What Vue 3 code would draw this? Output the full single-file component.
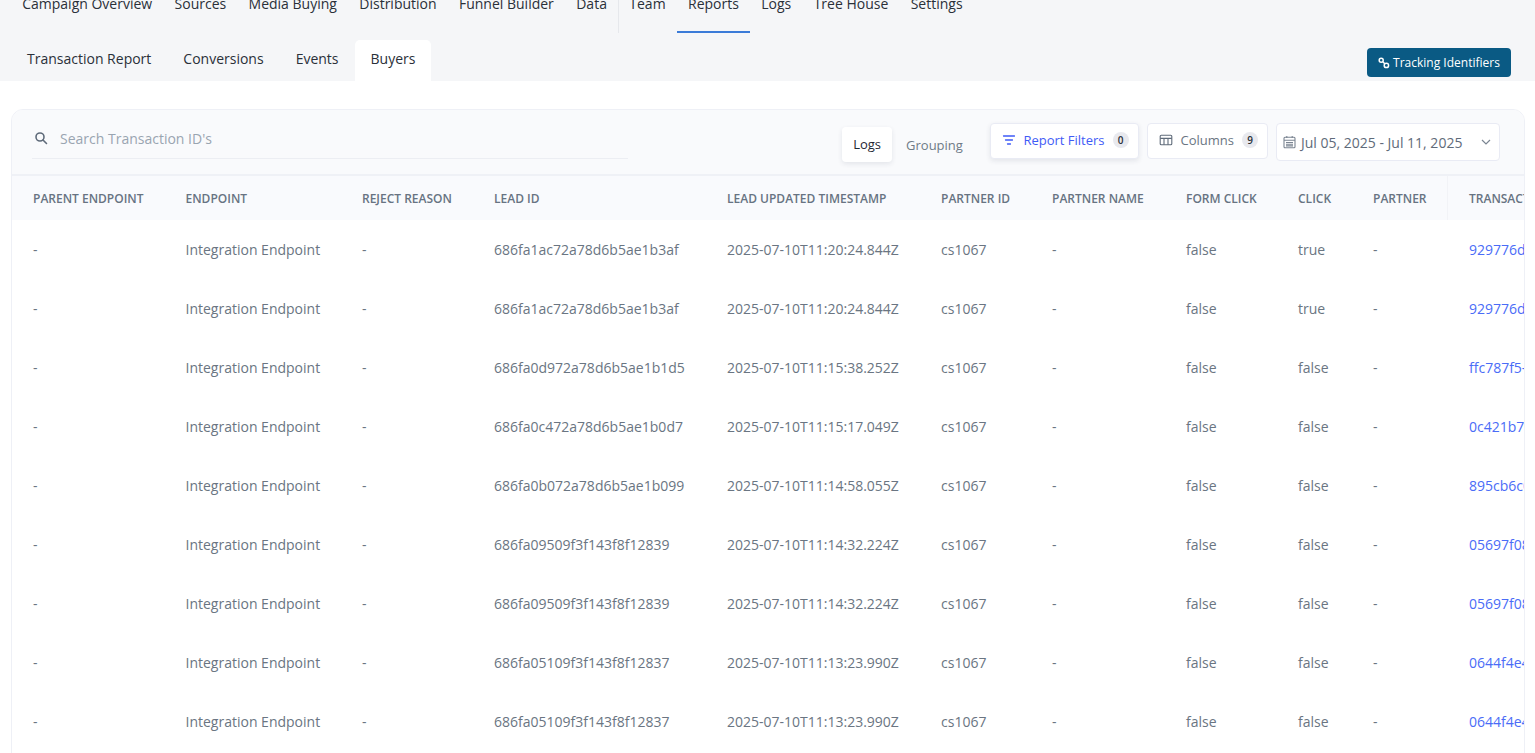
<script setup>
const nav = ['Campaign Overview', 'Sources', 'Media Buying', 'Distribution', 'Funnel Builder', 'Data']
const nav2 = ['Team', 'Reports', 'Logs', 'Tree House', 'Settings']
const tabs = ['Transaction Report', 'Conversions', 'Events', 'Buyers']
const heads = ['PARENT ENDPOINT', 'ENDPOINT', 'REJECT REASON', 'LEAD ID', 'LEAD UPDATED TIMESTAMP', 'PARTNER ID', 'PARTNER NAME', 'FORM CLICK', 'CLICK', 'PARTNER', 'TRANSACTION ID']
const widths = [152.5, 176.5, 132, 233, 214, 111, 134, 112, 75, 96, 300]
const rows = [
  ['686fa1ac72a78d6b5ae1b3af', '2025-07-10T11:20:24.844Z', 'true', '929776d4-8f21-4b7a'],
  ['686fa1ac72a78d6b5ae1b3af', '2025-07-10T11:20:24.844Z', 'true', '929776d4-8f21-4b7a'],
  ['686fa0d972a78d6b5ae1b1d5', '2025-07-10T11:15:38.252Z', 'false', 'ffc787f5-1a3c-49de'],
  ['686fa0c472a78d6b5ae1b0d7', '2025-07-10T11:15:17.049Z', 'false', '0c421b7a-62ef-4c10'],
  ['686fa0b072a78d6b5ae1b099', '2025-07-10T11:14:58.055Z', 'false', '895cb6c0-7d14-4e2b'],
  ['686fa09509f3f143f8f12839', '2025-07-10T11:14:32.224Z', 'false', '05697f08-3b9a-47c6'],
  ['686fa09509f3f143f8f12839', '2025-07-10T11:14:32.224Z', 'false', '05697f08-3b9a-47c6'],
  ['686fa05109f3f143f8f12837', '2025-07-10T11:13:23.990Z', 'false', '0644f4e4-95d2-4a81'],
  ['686fa05109f3f143f8f12837', '2025-07-10T11:13:23.990Z', 'false', '0644f4e4-95d2-4a81']
]
</script>

<template>
  <div class="page">
    <header class="top">
      <nav class="nav">
        <a v-for="n in nav" :key="n" class="nav-item">{{ n }}</a>
        <span class="nav-sep"></span>
        <a v-for="n in nav2" :key="n" class="nav-item" :class="{ active: n === 'Reports' }">{{ n }}</a>
      </nav>
      <div class="tabbar">
        <div class="tabs">
          <a v-for="t in tabs" :key="t" class="tab" :class="{ on: t === 'Buyers' }">{{ t }}</a>
        </div>
        <button class="track">
          <svg width="12" height="12" viewBox="0 0 12 12" fill="none" stroke="#fff" stroke-width="1.5"><circle cx="3.2" cy="3.2" r="2"/><circle cx="8.4" cy="8.4" r="2.2"/><path d="M4.8 4.8l2 2"/></svg>
          Tracking Identifiers
        </button>
      </div>
    </header>

    <main class="main">
      <section class="card">
        <div class="toolbar">
          <div class="search">
            <svg width="14" height="14" viewBox="0 0 14 14" fill="none" stroke="#5f6b7a" stroke-width="1.6"><circle cx="6" cy="6" r="4"/><path d="M9 9l3.5 3.5" stroke-linecap="round"/></svg>
            <span class="ph">Search Transaction ID's</span>
          </div>
          <div class="tools">
            <div class="seg">
              <span class="seg-on">Logs</span>
              <span class="seg-off">Grouping</span>
            </div>
            <button class="tool blue">
              <svg width="14" height="14" viewBox="0 0 14 14" fill="none" stroke="#3f5bf6" stroke-width="1.3" stroke-linecap="round"><path d="M1.5 3h11M3.5 7h7M5.5 11h3"/></svg>
              <span>Report Filters</span><i class="badge">0</i>
            </button>
            <button class="tool">
              <svg width="14" height="14" viewBox="0 0 14 14" fill="none" stroke="#5f6b7a" stroke-width="1.1"><rect x="1.2" y="2.2" width="11.6" height="9.6" rx="1"/><path d="M1.2 5.4h11.6M5 5.4v6.4M9 5.4v6.4"/></svg>
              <span>Columns</span><i class="badge">9</i>
            </button>
            <div class="date">
              <svg width="13" height="14" viewBox="0 0 13 14" fill="none" stroke="#7b8592" stroke-width="1.1"><rect x="1" y="2.2" width="11" height="10.6" rx="1"/><path d="M1 5.2h11M3.8 1v2M9.2 1v2M3 7.5h7M3 9.2h7M3 10.9h7"/></svg>
              <span class="date-text">Jul 05, 2025 - Jul 11, 2025</span>
              <svg class="chev" width="10" height="6" viewBox="0 0 10 6" fill="none" stroke="#7b8592" stroke-width="1.2"><path d="M1 1l4 4 4-4"/></svg>
            </div>
          </div>
        </div>
        <table class="grid">
          <colgroup>
            <col v-for="(w, i) in widths" :key="i" :style="{ width: w + 'px' }" />
          </colgroup>
          <thead>
            <tr>
              <th v-for="(h, i) in heads" :key="h" :class="{ edge: i === 9 }">{{ h }}</th>
            </tr>
          </thead>
          <tbody>
            <tr v-for="(r, i) in rows" :key="i">
              <td>-</td>
              <td>Integration Endpoint</td>
              <td>-</td>
              <td>{{ r[0] }}</td>
              <td>{{ r[1] }}</td>
              <td>cs1067</td>
              <td>-</td>
              <td>false</td>
              <td>{{ r[2] }}</td>
              <td>-</td>
              <td class="link">{{ r[3] }}</td>
            </tr>
          </tbody>
        </table>
      </section>
    </main>
  </div>
</template>

<style>
html, body { margin: 0; overflow: hidden; background: #fff; }
</style>

<style scoped>
.page {
  width: 1535px;
  height: 753px;
  overflow: hidden;
  font-family: "Open Sans", "Noto Sans", sans-serif;
  color: #1f2733;
}
.top { background: #f5f6f8; height: 81px; }
.nav {
  display: flex;
  height: 33px;
  padding-left: 11px;
  align-items: stretch;
}
.nav-item {
  position: relative;
  padding: 0 11.2px;
  font-size: 14px;
  line-height: 8px;
  color: #2a3039;
}
.nav-item.active::after {
  content: "";
  position: absolute;
  left: 0;
  right: 0;
  bottom: 0;
  height: 2px;
  background: #3b7bd8;
}
.nav-sep { width: 1px; background: #e6e8ec; margin-right: -1px; }
.tabbar {
  display: flex;
  justify-content: space-between;
  margin-top: 7px;
  height: 41px;
  padding: 0 24px 0 11px;
}
.tabs { display: flex; }
.tab {
  padding: 0 16px;
  font-size: 14px;
  line-height: 38px;
  color: #2a3039;
  border-radius: 5px 5px 0 0;
}
.tab.on { background: #fff; }
.track {
  margin-top: 8px;
  height: 29px;
  width: 144px;
  border: 0;
  border-radius: 4px;
  background: #0a5a84;
  color: #fff;
  font: 12px "Open Sans", sans-serif;
  display: flex;
  align-items: center;
  justify-content: center;
  gap: 3px;
  padding: 0;
}
.main { padding: 28px 10px 0 11px; }
.card {
  border: 1px solid #eef0f6;
  border-radius: 12px;
  overflow: hidden;
  background: #fff;
  padding-bottom: 40px;
}
.toolbar {
  display: flex;
  justify-content: space-between;
  height: 64px;
  background: #f9fafc;
  border-bottom: 2px solid #eff1f6;
  padding-left: 20px;
  padding-right: 24px;
}
.search {
  width: 596px;
  height: 49px;
  display: flex;
  align-items: center;
  gap: 12px;
  padding: 8px 0 0 2px;
  box-sizing: border-box;
  border-bottom: 1px solid #eceef3;
}
.ph { font-size: 14px; color: #9aa5b1; }
.tools { display: flex; align-items: flex-start; padding-top: 13px; }
.seg { display: flex; align-items: center; margin-top: 4px; margin-right: 14px; }
.seg-on {
  background: #fff;
  border-radius: 4px;
  box-shadow: 0 2px 5px rgba(40, 50, 80, .1);
  font-size: 13px;
  line-height: 35px;
  padding: 0 11px;
  color: #1f2733;
}
.seg-off { font-size: 13px; color: #6f7a87; padding: 0 13px 0 14px; }
.tool {
  height: 36px;
  margin-right: 8px;
  border: 1px solid #e9ebf4;
  border-radius: 4px;
  background: #fff;
  display: flex;
  align-items: center;
  padding: 0 9px 2px 11px;
  font: 13px "Open Sans", sans-serif;
  color: #6a7582;
  gap: 8px;
}
.tool.blue { color: #3f5bf6; box-shadow: 0 2px 5px rgba(40, 50, 80, .1); gap: 7.5px; }
.tool.blue .badge { margin-left: .5px; }
.badge {
  font-style: normal;
  font-size: 10px;
  font-weight: 600;
  color: #2a3039;
  background: #e8e9ee;
  width: 16px;
  height: 16px;
  border-radius: 8px;
  text-align: center;
  line-height: 16px;
}
.date {
  flex: none;
  width: 224px;
  height: 38px;
  box-sizing: border-box;
  padding: 0 8px 0 6px;
  border: 1px solid #e9ebf4;
  border-radius: 4px;
  background: #fff;
  display: flex;
  align-items: center;
}
.date-text { font-size: 14px; color: #5f6b7a; margin-left: 5px; white-space: nowrap; }
.chev { margin-left: auto; }
.grid {
  table-layout: fixed;
  border-collapse: collapse;
  width: 1736px;
}
.grid th {
  height: 44px;
  padding: 0 0 0 21px;
  background: #f9fafd;
  font-size: 12px;
  font-weight: 600;
  color: #677382;
  text-align: left;
  white-space: nowrap;
  overflow: hidden;
}
.grid th.edge { box-shadow: inset -1px 0 0 #f2f3f7; }
.grid td {
  height: 59px;
  padding: 0 0 0 21px;
  font-size: 14px;
  color: #6a7582;
  white-space: nowrap;
  overflow: hidden;
}
.grid td.link { color: #4a6cf7; }
</style>
